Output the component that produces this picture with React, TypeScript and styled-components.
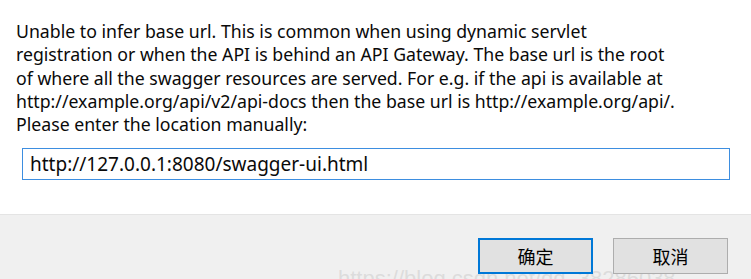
import React, {useEffect, useRef, useState} from "react";
import styled, {createGlobalStyle} from "styled-components";

const GlobalStyle = createGlobalStyle`
  html, body {
    margin: 0;
    padding: 0;
    background: #ffffff;
  }
  body {
    width: 751px;
    height: 279px;
    overflow: hidden;
  }
`

const Dialog = styled.div`
  position: relative;
  width: 751px;
  height: 279px;
  display: flex;
  flex-direction: column;
  font-family: "Noto Sans", "Open Sans", "Noto Sans CJK SC", sans-serif;
  color: #000;
  overflow: hidden;
`

const Body = styled.div`
  height: 214px;
  background: white;
  padding: 20px 0 0 16px;
  box-sizing: border-box;
`

const Message = styled.p`
  margin: 0;
  font-size: 17.7px;
  line-height: 23.3px;
  white-space: nowrap;
  color: #0a0a0a;
`

const UrlInput = styled.input`
  display: block;
  margin: 12px 0 0 6px;
  width: 708px;
  height: 32px;
  box-sizing: border-box;
  border: 1px solid #3d8ee0;
  outline: none;
  padding: 0 7px;
  font-family: inherit;
  font-size: 19px;
  color: #0a0a0a;
  caret-color: #000;
`

const Footer = styled.div`
  flex: 1;
  background: #f0f0f0;
  border-top: 1px solid #e4e4e4;
  display: flex;
  justify-content: flex-end;
  align-items: flex-start;
  gap: 20px;
  padding: 23px 23px 0 0;
`

const Button = styled.button<{primary?: boolean}>`
  position: relative;
  z-index: 1;
  width: 115px;
  height: 36px;
  box-sizing: border-box;
  background: #e1e1e1;
  border: ${p => p.primary ? "2px solid #0078d7" : "1px solid #adadad"};
  font-family: "Noto Sans CJK SC", sans-serif;
  font-size: 18px;
  color: #000;
  padding: 0;
`

const Watermark = styled.div`
  position: absolute;
  left: 338px;
  top: 266px;
  font-family: "Liberation Sans", sans-serif;
  font-size: 22px;
  color: rgba(200, 200, 200, 0.5);
  white-space: nowrap;
  pointer-events: none;
`

const lines = [
    "Unable to infer base url. This is common when using dynamic servlet",
    "registration or when the API is behind an API Gateway. The base url is the root",
    "of where all the swagger resources are served. For e.g. if the api is available at",
    "http://example.org/api/v2/api-docs then the base url is http://example.org/api/.",
    "Please enter the location manually:",
]

const App = () => {
    const [url, setUrl] = useState('http://127.0.0.1:8080/swagger-ui.html')
    const inputRef = useRef<HTMLInputElement>(null)
    useEffect(() => {
        const el = inputRef.current
        if (el) {
            el.focus()
            el.setSelectionRange(el.value.length, el.value.length)
        }
    }, [])
    return (
        <>
            <GlobalStyle/>
            <Dialog>
                <Body>
                    <Message>
                        {lines.map((l, i) =>
                            <React.Fragment key={i}>{l}{i < lines.length - 1 && <br/>}</React.Fragment>
                        )}
                    </Message>
                    <UrlInput ref={inputRef} value={url} onChange={e => setUrl(e.target.value)}/>
                </Body>
                <Watermark>https://blog.csdn.net/qq_38286038</Watermark>
                <Footer>
                    <Button primary>确定</Button>
                    <Button>取消</Button>
                </Footer>
            </Dialog>
        </>
    )
}

export default App
